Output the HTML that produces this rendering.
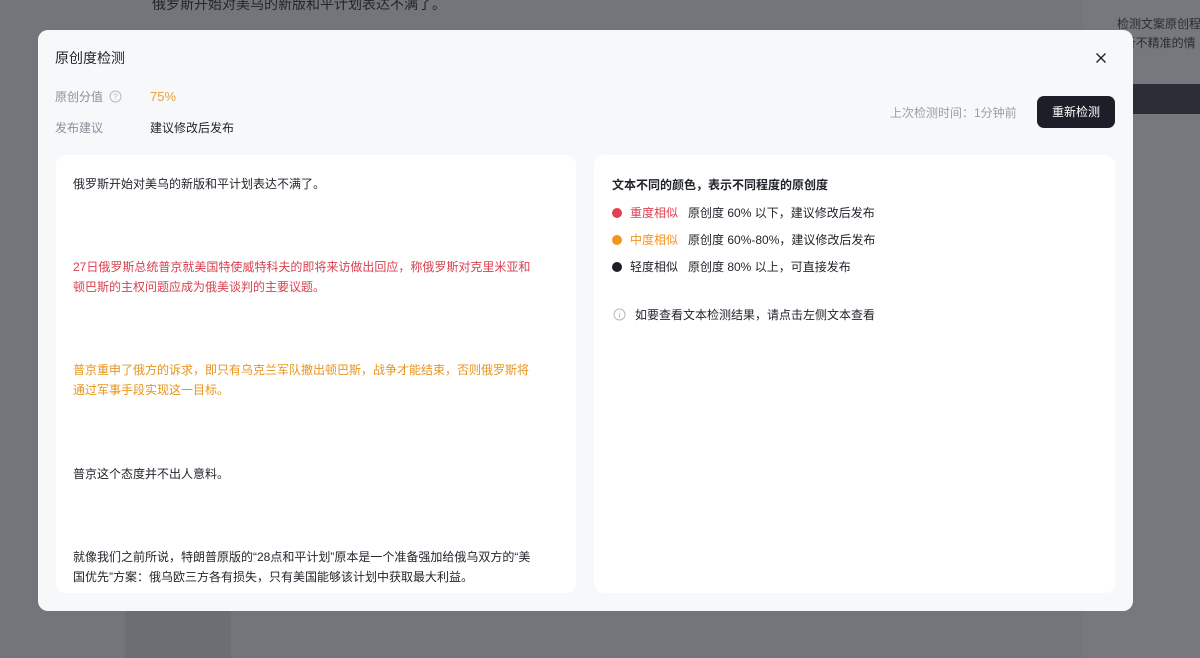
<!DOCTYPE html>
<html><head><meta charset="utf-8"><style>
*{margin:0;padding:0;box-sizing:border-box}
body{width:1200px;height:658px;overflow:hidden;background:#727579;font-family:"Liberation Sans","Noto Sans CJK SC",sans-serif;position:relative}
.abs{position:absolute}
.modal{left:38px;top:30px;width:1095px;height:581px;background:#f7f8fa;border-radius:10px}
.panel{background:#fff;border-radius:10px;top:155px;height:438px}
.t{font-size:12px;color:#1f2329;line-height:20px}
</style></head><body>
<div class="abs" style="left:125px;top:611px;width:106px;height:47px;background:#6b6e73"></div>
<div class="abs" style="left:1083px;top:0;width:117px;height:658px;background:#76787d"></div>
<div class="abs" style="left:1085px;top:84px;width:115px;height:30px;background:#2b2e34"></div>
<div class="abs" style="left:1117px;top:15px;font-size:12px;color:#2a2c30;line-height:19px;white-space:nowrap">检测文案原创程<br>&nbsp;&nbsp;析不精准的情</div>
<div class="abs" style="left:152px;top:-6px;font-size:14px;color:#232528;white-space:nowrap">俄罗斯开始对美乌的新版和平计划表达不满了。</div>

<div class="abs modal"></div>
<div class="abs" style="left:55px;top:48px;font-size:14px;color:#1f2329">原创度检测</div>
<svg class="abs" style="left:1095px;top:52px" width="12" height="12" viewBox="0 0 12 12"><path d="M1.5 1.5L10.5 10.5M10.5 1.5L1.5 10.5" stroke="#1f2329" stroke-width="1.4"/></svg>
<div class="abs" style="left:55px;top:88px;font-size:12px;color:#8a8f99">原创分值</div>
<svg class="abs" style="left:109px;top:90px" width="13" height="13" viewBox="0 0 13 13"><circle cx="6.5" cy="6.5" r="5.5" fill="none" stroke="#b5b9c0"/><text x="6.5" y="9.5" font-size="8" text-anchor="middle" fill="#b5b9c0" font-family="Liberation Sans">?</text></svg>
<div class="abs" style="left:150px;top:89px;font-size:13px;color:#e8a23c">75%</div>
<div class="abs" style="left:55px;top:119px;font-size:12px;color:#8a8f99">发布建议</div>
<div class="abs" style="left:150px;top:119px;font-size:12px;color:#1f2329">建议修改后发布</div>
<div class="abs" style="left:890px;top:104px;font-size:12px;color:#9a9ea6">上次检测时间：1分钟前</div>
<div class="abs" style="left:1037px;top:96px;width:78px;height:32px;background:#1c1f27;border-radius:7px;color:#fff;font-size:12px;line-height:32px;text-align:center">重新检测</div>

<div class="abs panel" style="left:56px;width:520px"></div>
<div class="abs panel" style="left:594px;width:521px"></div>

<div class="abs t" style="left:73px;top:174px">俄罗斯开始对美乌的新版和平计划表达不满了。</div>
<div class="abs t" style="left:73px;top:257px;width:490px;color:#d9414f">27日俄罗斯总统普京就美国特使威特科夫的即将来访做出回应，称俄罗斯对克里米亚和<br>顿巴斯的主权问题应成为俄美谈判的主要议题。</div>
<div class="abs t" style="left:73px;top:360px;width:490px;color:#e8941e">普京重申了俄方的诉求，即只有乌克兰军队撤出顿巴斯，战争才能结束，否则俄罗斯将<br>通过军事手段实现这一目标。</div>
<div class="abs t" style="left:73px;top:464px">普京这个态度并不出人意料。</div>
<div class="abs t" style="left:73px;top:547px;width:490px">就像我们之前所说，特朗普原版的“28点和平计划”原本是一个准备强加给俄乌双方的“美<br>国优先”方案：俄乌欧三方各有损失，只有美国能够该计划中获取最大利益。</div>

<div class="abs" style="left:612px;top:176px;font-size:12px;font-weight:bold;color:#1f2329">文本不同的颜色，表示不同程度的原创度</div>
<div class="abs" style="left:612px;top:208px;width:10px;height:10px;border-radius:50%;background:#e0404f"></div>
<div class="abs t" style="left:630px;top:203px"><span style="color:#e0404f">重度相似</span>&nbsp;&nbsp;&nbsp;原创度 60% 以下，建议修改后发布</div>
<div class="abs" style="left:612px;top:235px;width:10px;height:10px;border-radius:50%;background:#f0951e"></div>
<div class="abs t" style="left:630px;top:230px"><span style="color:#f0951e">中度相似</span>&nbsp;&nbsp;&nbsp;原创度 60%-80%，建议修改后发布</div>
<div class="abs" style="left:612px;top:262px;width:10px;height:10px;border-radius:50%;background:#1c1f27"></div>
<div class="abs t" style="left:630px;top:257px">轻度相似&nbsp;&nbsp;&nbsp;原创度 80% 以上，可直接发布</div>
<svg class="abs" style="left:613px;top:308px" width="13" height="13" viewBox="0 0 13 13"><circle cx="6.5" cy="6.5" r="5.5" fill="none" stroke="#b5b9c0"/><path d="M6.5 5.5V9.5M6.5 3.5V4.3" stroke="#b5b9c0"/></svg>
<div class="abs t" style="left:635px;top:305px">如要查看文本检测结果，请点击左侧文本查看</div>
</body></html>
